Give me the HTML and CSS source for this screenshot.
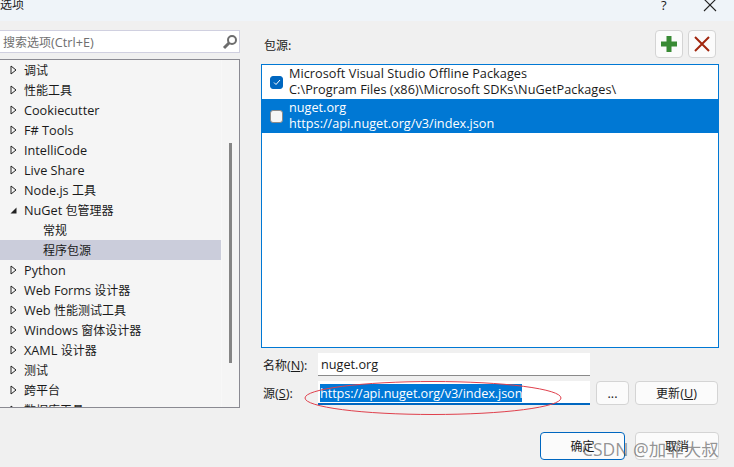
FILE: index.html
```html
<!DOCTYPE html>
<html lang="zh">
<head>
<meta charset="utf-8">
<title>选项</title>
<link rel="stylesheet" href="styles.css">
</head>
<body>
<div class="dialog">
  <header class="titlebar">
    <span class="title">选项</span>
    <span class="help">?</span>
    <svg class="close" width="14" height="14" viewBox="0 0 14 14"><path d="M1 -1L13 11M13 -1L1 11" stroke="#222" stroke-width="1.1" fill="none"/></svg>
  </header>
  <div class="main">
    <aside class="left">
      <div class="search">
        <span class="search-text"><span class="zh">搜索选项</span>(Ctrl+E)</span>
        <svg width="16" height="16" viewBox="0 0 16 16"><circle cx="10" cy="6" r="4" fill="none" stroke="#6d6d6d" stroke-width="2"/><path d="M7 9L2 14" stroke="#6d6d6d" stroke-width="3"/></svg>
      </div>
      <div class="tree">
        <ul class="rows">
          <li class="row"><svg class="tri" width="7" height="10" viewBox="0 0 7 10"><path d="M1 1L6 5L1 9z" fill="#f5f5f5" stroke="#222"/></svg><span class="zh">调试</span></li>
          <li class="row"><svg class="tri" width="7" height="10" viewBox="0 0 7 10"><path d="M1 1L6 5L1 9z" fill="#f5f5f5" stroke="#222"/></svg><span class="zh">性能工具</span></li>
          <li class="row"><svg class="tri" width="7" height="10" viewBox="0 0 7 10"><path d="M1 1L6 5L1 9z" fill="#f5f5f5" stroke="#222"/></svg>Cookiecutter</li>
          <li class="row"><svg class="tri" width="7" height="10" viewBox="0 0 7 10"><path d="M1 1L6 5L1 9z" fill="#f5f5f5" stroke="#222"/></svg>F# Tools</li>
          <li class="row"><svg class="tri" width="7" height="10" viewBox="0 0 7 10"><path d="M1 1L6 5L1 9z" fill="#f5f5f5" stroke="#222"/></svg>IntelliCode</li>
          <li class="row"><svg class="tri" width="7" height="10" viewBox="0 0 7 10"><path d="M1 1L6 5L1 9z" fill="#f5f5f5" stroke="#222"/></svg>Live Share</li>
          <li class="row"><svg class="tri" width="7" height="10" viewBox="0 0 7 10"><path d="M1 1L6 5L1 9z" fill="#f5f5f5" stroke="#222"/></svg>Node.js&nbsp;<span class="zh">工具</span></li>
          <li class="row"><svg class="tri" width="7" height="10" viewBox="0 0 7 10"><path d="M0.500 8.500H6.500V2.500z" fill="#222"/></svg>NuGet&nbsp;<span class="zh">包管理器</span></li>
          <li class="row child"><span class="zh">常规</span></li>
          <li class="row child selected"><span class="zh">程序包源</span></li>
          <li class="row"><svg class="tri" width="7" height="10" viewBox="0 0 7 10"><path d="M1 1L6 5L1 9z" fill="#f5f5f5" stroke="#222"/></svg>Python</li>
          <li class="row"><svg class="tri" width="7" height="10" viewBox="0 0 7 10"><path d="M1 1L6 5L1 9z" fill="#f5f5f5" stroke="#222"/></svg>Web Forms&nbsp;<span class="zh">设计器</span></li>
          <li class="row"><svg class="tri" width="7" height="10" viewBox="0 0 7 10"><path d="M1 1L6 5L1 9z" fill="#f5f5f5" stroke="#222"/></svg>Web&nbsp;<span class="zh">性能测试工具</span></li>
          <li class="row"><svg class="tri" width="7" height="10" viewBox="0 0 7 10"><path d="M1 1L6 5L1 9z" fill="#f5f5f5" stroke="#222"/></svg>Windows&nbsp;<span class="zh">窗体设计器</span></li>
          <li class="row"><svg class="tri" width="7" height="10" viewBox="0 0 7 10"><path d="M1 1L6 5L1 9z" fill="#f5f5f5" stroke="#222"/></svg>XAML&nbsp;<span class="zh">设计器</span></li>
          <li class="row"><svg class="tri" width="7" height="10" viewBox="0 0 7 10"><path d="M1 1L6 5L1 9z" fill="#f5f5f5" stroke="#222"/></svg><span class="zh">测试</span></li>
          <li class="row"><svg class="tri" width="7" height="10" viewBox="0 0 7 10"><path d="M1 1L6 5L1 9z" fill="#f5f5f5" stroke="#222"/></svg><span class="zh">跨平台</span></li>
          <li class="row"><svg class="tri" width="7" height="10" viewBox="0 0 7 10"><path d="M1 1L6 5L1 9z" fill="#f5f5f5" stroke="#222"/></svg><span class="zh">数据库工具</span></li>
        </ul>
        <div class="scrollbar"><div class="thumb"></div></div>
      </div>
    </aside>
    <section class="right">
      <div class="head">
        <span class="zh">包源:</span>
        <div class="tools">
          <button class="tool"><svg width="18" height="18" viewBox="0 0 18 18"><path d="M6.500 1h5v5.500H17v5h-5.500V17h-5v-5.500H1v-5h5.500z" fill="#388a34"/></svg></button>
          <button class="tool"><svg width="18" height="18" viewBox="0 0 18 18"><path d="M2 2L16 16M16 2L2 16" stroke="#a1260d" stroke-width="2" fill="none"/></svg></button>
        </div>
      </div>
      <div class="list">
        <div class="item">
          <span class="check on"><svg width="10" height="10" viewBox="0 0 10 10"><path d="M2 5.500L4 7.500L8 3" stroke="#fff" fill="none"/></svg></span>
          <div class="lines"><div class="wide">Microsoft Visual Studio Offline Packages</div><div class="wide">C:\Program Files (x86)\Microsoft SDKs\NuGetPackages\</div></div>
        </div>
        <div class="item active">
          <span class="check"></span>
          <div class="lines"><div>nuget.org</div><div>https://api.nuget.org/v3/index.json</div></div>
        </div>
      </div>
      <div class="form">
        <div class="field">
          <label class="label"><span class="zh">名称</span>(<u>N</u>):</label>
          <div class="input">nuget.org</div>
        </div>
        <div class="field second">
          <label class="label"><span class="zh">源</span>(<u>S</u>):</label>
          <div class="input focus"><span class="sel">https://api.nuget.org/v3/index.json</span></div>
          <button class="btn dots">...</button>
          <button class="btn update"><span class="zh">更新</span>(<u>U</u>)</button>
        </div>
      </div>
      <div class="actions">
        <button class="btn act primary"><span class="zh">确定</span></button>
        <button class="btn act"><span class="zh">取消</span></button>
      </div>
    </section>
  </div>
</div>
<svg class="ellipse" width="264" height="40" viewBox="0 0 264 40"><ellipse cx="132" cy="20" rx="128" ry="16.500" fill="none" stroke="#e0404c"/></svg>
<span class="watermark">CSDN @加菲大叔</span>
</body>
</html>
```

FILE: styles.css
```css
* { box-sizing: border-box; }
html, body { margin: 0; padding: 0; height: 100%; }
body {
  width: 734px; height: 467px; overflow: hidden; position: relative;
  background: #f0f0f0; color: #1a1a1a;
  font: 12.7px/20px "Open Sans", "Noto Sans CJK SC", sans-serif;
}
.zh { font-family: "Noto Sans CJK SC", sans-serif; font-size: 12px; }
.dialog { display: flex; flex-direction: column; height: 467px; }
.titlebar {
  height: 21px; flex: none; background: #eff4f9; position: relative;
  display: flex; overflow: hidden;
}
.title { margin-top: -5px; font-size: 12px; }
.help { position: absolute; left: 661px; top: -5px; font-size: 13px; }
.close { position: absolute; left: 703px; top: 0; }
.main { display: flex; flex: 1; min-height: 0; }
.left { width: 240px; flex: none; padding-top: 9px; }
.search {
  height: 23px; margin-left: -1px; background: #fff; border: 1px solid #d0d0e0;
  display: flex; align-items: center; justify-content: space-between; padding: 0 1px 0 3px;
  color: #6f6f6f;
}
.tree {
  height: 349px; margin-top: 6px; margin-left: -1px; border: 1px solid #8a8a92;
  background: #f5f5f5; display: flex; overflow: hidden;
}
.rows { list-style: none; margin: 0; padding: 0; width: 221px; flex: none; }
.row { height: 20px; display: flex; align-items: center; padding-left: 10px; white-space: nowrap; }
.tri { margin-right: 7px; flex: none; }
.child { padding-left: 43px; }
.selected { background: #cbcddb; }
.scrollbar { flex: 1; position: relative; border-left: 1px solid #f8f8f8; }
.thumb { position: absolute; left: 7px; top: 83px; width: 3px; height: 220px; background: #868686; }
.right { flex: 1; padding: 0 15px 0 21px; min-width: 0; }
.head { display: flex; justify-content: space-between; align-items: center; height: 43px; padding-top: 5px; padding-right: 3px; padding-left: 3px; }
.tools { display: flex; gap: 5px; margin-top: -2px; }
.tool {
  width: 28px; height: 28px; padding: 0; background: #fbfbfb; border: 1px solid #d4d4d4; border-radius: 4px;
  display: flex; align-items: center; justify-content: center;
}
.list { height: 284px; border: 1px solid #0078d4; background: #fff; }
.item { height: 34px; display: flex; align-items: center; padding-left: 8px; gap: 6px; line-height: 16px; }
.item.active { background: #0078d4; color: #fff; }
.lines { padding-bottom: 2px; }
.wide { letter-spacing: 0.05px; }
.check {
  width: 13px; height: 13px; flex: none; border-radius: 3px; background: #f6f6f6; border: 1px solid #8a8a8a;
  display: flex; align-items: center; justify-content: center;
}
.check.on { background: #0067c0; border-color: #0067c0; }
.form { margin-top: 5px; }
.field { display: flex; align-items: center; height: 23px; }
.second { margin-top: 5px; height: 24px; }
.label { width: 57px; flex: none; padding-left: 2px; }
.input {
  width: 272px; flex: none; height: 100%; background: #fff; border-bottom: 1px solid #8a8a8a;
  padding-left: 3px; line-height: 22px;
}
.focus { border-bottom: 2px solid #0067c0; padding-top: 2px; padding-left: 2px; line-height: 20px; }
.sel { background: #0078d7; color: #fff; display: inline-block; height: 18px; line-height: 18px; letter-spacing: -0.08px; }
.btn {
  font: inherit; color: inherit; padding: 0; background: #fbfbfb; border: 1px solid #d4d4d4; border-radius: 4px;
}
.dots { width: 33px; height: 24px; margin-left: 6px; line-height: 14px; }
.update { width: 83px; height: 24px; margin-left: 6px; }
.actions { display: flex; gap: 10px; margin-top: 27px; margin-left: 279px; }
.act { width: 85px; height: 28px; }
.primary { width: 86px; border: 1px solid #0067c0; }
.ellipse { position: absolute; left: 301px; top: 378px; }
.watermark { position: absolute; left: 582px; top: 437px; font-size: 17.5px; line-height: 24px; color: rgba(80,80,80,.62); white-space: nowrap; }
```
